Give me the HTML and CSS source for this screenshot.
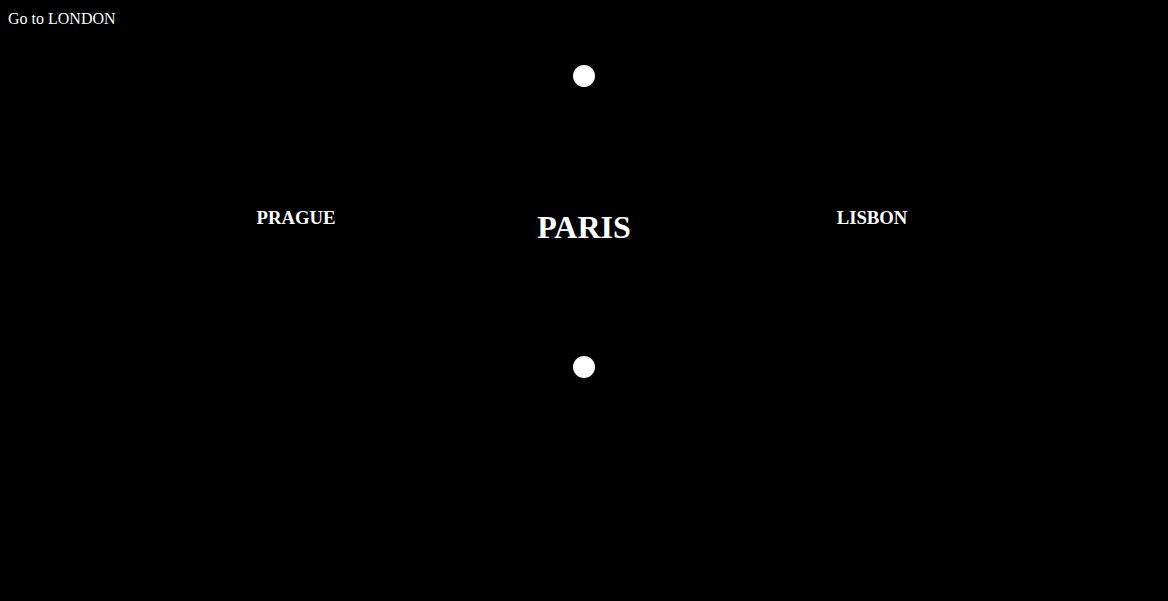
FILE: index.html
```html
<!DOCTYPE html>
<html>
<head>
<meta charset="utf-8">
<link rel="stylesheet" href="styles.css">
</head>
<body>
<div class="nav"><a class="nav-link" href="#">Go to LONDON</a></div>
<div class="stage">
  <div class="dot dot-top"></div>
  <div class="row">
    <div class="city"><h3 class="city-name">PRAGUE</h3></div>
    <div class="city"><h1 class="city-main">PARIS</h1></div>
    <div class="city"><h3 class="city-name">LISBON</h3></div>
  </div>
  <div class="dot dot-bottom"></div>
</div>
</body>
</html>
```

FILE: styles.css
```css
html, body {
  background: #000;
}
body {
  margin: 8px;
  color: #fff;
  font-family: "Liberation Serif", "Times New Roman", serif;
  font-size: 16px;
}
.nav {
  line-height: 18px;
  height: 18px;
  padding-top: 2px;
}
.nav-link {
  color: #fff;
  text-decoration: none;
}
.stage {
  display: flex;
  flex-direction: column;
  align-items: center;
}
.dot {
  width: 22px;
  height: 22px;
  border-radius: 50%;
  background: #fff;
}
.dot-top {
  margin-top: 37px;
}
.row {
  display: flex;
  justify-content: center;
  align-items: flex-start;
  margin-top: 101px;
}
.city {
  width: 288px;
  text-align: center;
}
.city-name {
  font-size: 18.72px;
  font-weight: bold;
  margin: 18.72px 0;
}
.city-main {
  font-size: 32px;
  font-weight: bold;
  margin: 21.44px 0;
}
.dot-bottom {
  margin-top: 88px;
}
```
